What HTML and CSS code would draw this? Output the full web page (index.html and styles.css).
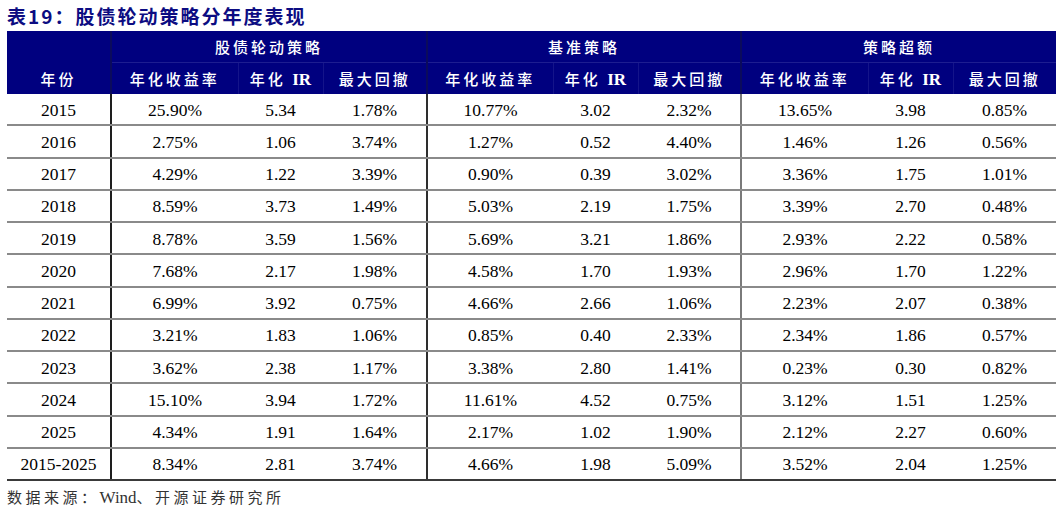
FILE: index.html
```html
<!DOCTYPE html>
<html lang="zh">
<head>
<meta charset="utf-8">
<link rel="stylesheet" href="styles.css">
</head>
<body>
<div class="page">
  <h1 class="title">表19：股债轮动策略分年度表现</h1>
  <table class="perf">
    <colgroup>
      <col class="c-year">
      <col class="c-ret"><col class="c-ir"><col class="c-dd">
      <col class="c-ret2"><col class="c-ir"><col class="c-dd2">
      <col class="c-ret"><col class="c-ir"><col class="c-dd2">
    </colgroup>
    <thead>
      <tr class="h1">
        <th class="year-cell blank"></th>
        <th colspan="3" class="grp">股债轮动策略</th>
        <th colspan="3" class="grp">基准策略</th>
        <th colspan="3" class="grp last">策略超额</th>
      </tr>
      <tr class="h2">
        <th class="year-cell">年份</th>
        <th>年化收益率</th><th>年化 <b>IR</b></th><th class="gend">最大回撤</th>
        <th>年化收益率</th><th>年化 <b>IR</b></th><th class="gend">最大回撤</th>
        <th>年化收益率</th><th>年化 <b>IR</b></th><th>最大回撤</th>
      </tr>
    </thead>
    <tbody>
      <tr><td class="year-cell">2015</td><td>25.90%</td><td>5.34</td><td class="gend">1.78%</td><td>10.77%</td><td>3.02</td><td class="gend g2">2.32%</td><td>13.65%</td><td>3.98</td><td>0.85%</td></tr>
      <tr><td class="year-cell">2016</td><td>2.75%</td><td>1.06</td><td class="gend">3.74%</td><td>1.27%</td><td>0.52</td><td class="gend g2">4.40%</td><td>1.46%</td><td>1.26</td><td>0.56%</td></tr>
      <tr><td class="year-cell">2017</td><td>4.29%</td><td>1.22</td><td class="gend">3.39%</td><td>0.90%</td><td>0.39</td><td class="gend g2">3.02%</td><td>3.36%</td><td>1.75</td><td>1.01%</td></tr>
      <tr><td class="year-cell">2018</td><td>8.59%</td><td>3.73</td><td class="gend">1.49%</td><td>5.03%</td><td>2.19</td><td class="gend g2">1.75%</td><td>3.39%</td><td>2.70</td><td>0.48%</td></tr>
      <tr><td class="year-cell">2019</td><td>8.78%</td><td>3.59</td><td class="gend">1.56%</td><td>5.69%</td><td>3.21</td><td class="gend g2">1.86%</td><td>2.93%</td><td>2.22</td><td>0.58%</td></tr>
      <tr><td class="year-cell">2020</td><td>7.68%</td><td>2.17</td><td class="gend">1.98%</td><td>4.58%</td><td>1.70</td><td class="gend g2">1.93%</td><td>2.96%</td><td>1.70</td><td>1.22%</td></tr>
      <tr><td class="year-cell">2021</td><td>6.99%</td><td>3.92</td><td class="gend">0.75%</td><td>4.66%</td><td>2.66</td><td class="gend g2">1.06%</td><td>2.23%</td><td>2.07</td><td>0.38%</td></tr>
      <tr><td class="year-cell">2022</td><td>3.21%</td><td>1.83</td><td class="gend">1.06%</td><td>0.85%</td><td>0.40</td><td class="gend g2">2.33%</td><td>2.34%</td><td>1.86</td><td>0.57%</td></tr>
      <tr><td class="year-cell">2023</td><td>3.62%</td><td>2.38</td><td class="gend">1.17%</td><td>3.38%</td><td>2.80</td><td class="gend g2">1.41%</td><td>0.23%</td><td>0.30</td><td>0.82%</td></tr>
      <tr><td class="year-cell">2024</td><td>15.10%</td><td>3.94</td><td class="gend">1.72%</td><td>11.61%</td><td>4.52</td><td class="gend g2">0.75%</td><td>3.12%</td><td>1.51</td><td>1.25%</td></tr>
      <tr><td class="year-cell">2025</td><td>4.34%</td><td>1.91</td><td class="gend">1.64%</td><td>2.17%</td><td>1.02</td><td class="gend g2">1.90%</td><td>2.12%</td><td>2.27</td><td>0.60%</td></tr>
      <tr><td class="year-cell">2015-2025</td><td>8.34%</td><td>2.81</td><td class="gend">3.74%</td><td>4.66%</td><td>1.98</td><td class="gend g2">5.09%</td><td>3.52%</td><td>2.04</td><td>1.25%</td></tr>
    </tbody>
  </table>
  <p class="source">数据来源：<span class="latin">Wind</span>、开源证券研究所</p>
</div>
</body>
</html>
```

FILE: styles.css
```css
html, body {
  margin: 0;
  padding: 0;
  background: #ffffff;
}

.page {
  padding: 0 6px 0 7px;
}

.title {
  margin: 0;
  height: 31px;
  line-height: 31px;
  font-family: "Noto Sans CJK SC", "Liberation Serif", serif;
  font-size: 19px;
  font-weight: 700;
  letter-spacing: 2px;
  color: #0c0c82;
}

.perf {
  width: 1049px;
  table-layout: fixed;
  border-collapse: collapse;
  font-family: "Liberation Serif", "Noto Sans CJK SC", serif;
  color: #000;
}

.c-year { width: 104px; }
.c-ret { width: 127px; }
.c-ret2 { width: 126px; }
.c-ir { width: 85px; }
.c-dd { width: 104px; }
.c-dd2 { width: 103px; }

.perf thead th {
  background: #00007f;
  color: #ffffff;
  font-family: "Noto Sans CJK SC", "Liberation Serif", serif;
  font-weight: 500;
  font-size: 15px;
  letter-spacing: 3px;
  padding: 0;
  text-align: center;
}

.perf thead th b {
  font-family: "Liberation Serif", serif;
  font-weight: 700;
  font-size: 17px;
  letter-spacing: 0;
}

.h1 th {
  height: 31px;
  border-bottom: 1px solid #1d1d90;
}

.h1 th.blank {
  border-bottom: none;
}

.h2 th {
  height: 31px;
  border-left: 1px solid #14148a;
}

.h1 th.grp {
  border-left: 2px solid #0b0b5c;
}

.h2 th.year-cell {
  border-left: none;
}

.h2 th.year-cell + th,
.h2 th.gend + th {
  border-left: 2px solid #0b0b5c;
}

.perf tbody td {
  height: 29.25px;
  padding: 1px 0 0 0;
  text-align: center;
  font-size: 17.5px;
  line-height: 20px;
  border-bottom: 2px solid #8a8a8a;
}

.perf tbody td.year-cell {
  border-right: 2px solid #1e1e1e;
}

.perf tbody td.gend {
  border-right: 2px solid #2e2e2e;
}

.perf tbody td.gend.g2 {
  border-right: 2px solid #7a7a7a;
}

.perf tbody tr:last-child td {
  border-bottom: 2px solid #3a3a3a;
}

.source {
  margin: 5px 0 0 0;
  font-family: "Noto Sans CJK SC", "Liberation Serif", serif;
  font-size: 15px;
  letter-spacing: 3.5px;
  color: #333;
}

.source .latin {
  font-family: "Liberation Serif", serif;
  font-size: 17px;
  letter-spacing: 0;
}
```
